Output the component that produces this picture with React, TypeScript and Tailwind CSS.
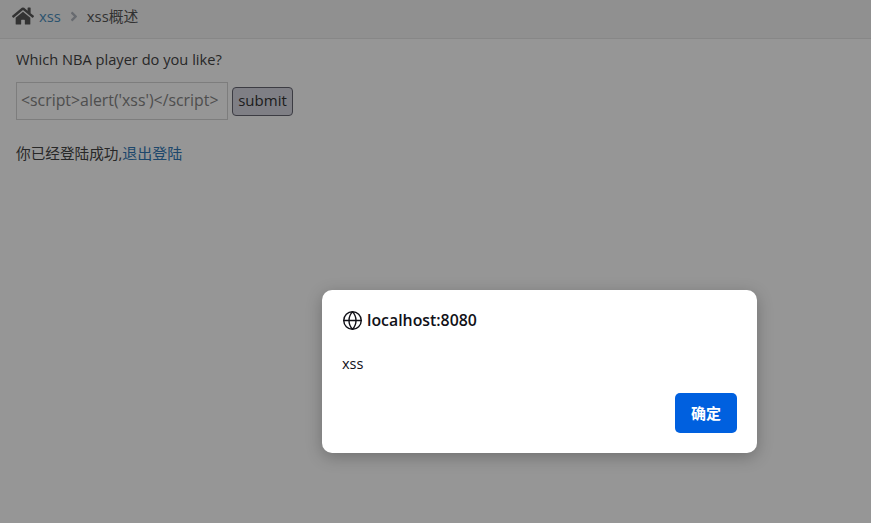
import { FaHome } from "react-icons/fa";
import { FaAngleRight } from "react-icons/fa";
import { Globe } from "lucide-react";

const pageFont = "font-['Open_Sans','Noto_Sans_CJK_SC',sans-serif]";

function Breadcrumbs() {
  return (
    <div className="flex h-[39px] items-center border-b border-[#e5e5e5] bg-[#f5f5f5] pb-[5px] pl-[12px] text-[14.8px] leading-none">
      <FaHome className="h-[24px] w-[22px] -translate-y-[1px] text-[#585858]" />
      <a className="ml-[5px] text-[#4c8fbd]">xss</a>
      <FaAngleRight className="ml-[9px] mr-[9px] h-[15px] w-[8px] text-[#b2b6bf]" />
      <span className="text-[#555555]">xss概述</span>
    </div>
  );
}

function VulnForm() {
  return (
    <div className="px-[16px] pt-[10px] text-[14.65px] text-[#444444]">
      <p className="leading-[20px]">Which NBA player do you like?</p>
      <div className="mt-[13px] flex items-center gap-[4px]">
        <div className="flex h-[38px] w-[212px] items-center border border-[#d5d5d5] bg-white pl-[4px] text-[15.85px] text-[#858585]">
          {"<script>alert('xss')</script>"}
        </div>
        <button className="h-[29px] w-[61px] rounded-[4px] border border-[#666672] bg-[#d8d8e3] pb-[1px] text-[15px] text-[#333333]">
          submit
        </button>
      </div>
      <p className="mt-[23px] leading-[20px]">
        你已经登陆成功,<a className="text-[15px] text-[#337ab7]">退出登陆</a>
      </p>
    </div>
  );
}

function AlertDialog() {
  return (
    <div className="absolute left-[322px] top-[290px] h-[163px] w-[435px] rounded-[10px] bg-white px-[20px] pt-[20px] text-black shadow-[0_4px_16px_rgba(0,0,0,0.25)]">
      <div className="flex h-[21px] items-center gap-[4px] text-[15.85px] font-semibold text-[#111118]">
        <Globe className="h-[21px] w-[21px]" strokeWidth={1.6} />
        <span className="-translate-y-[0.5px]">localhost:8080</span>
      </div>
      <p className="mt-[23px] h-[20px] text-[14.5px] leading-[20px] text-[#111118]">xss</p>
      <div className="mt-[19px] flex justify-end">
        <button className="h-[40px] w-[62px] rounded-[5px] bg-[#0060df] text-[15px] font-semibold text-white">确定</button>
      </div>
    </div>
  );
}

export default function App() {
  return (
    <div className={`relative h-[523px] w-[871px] overflow-hidden bg-white ${pageFont}`}>
      <Breadcrumbs />
      <VulnForm />
      {/* browser alert backdrop */}
      <div className="absolute inset-0 bg-black/[0.41]" />
      <AlertDialog />
    </div>
  );
}
